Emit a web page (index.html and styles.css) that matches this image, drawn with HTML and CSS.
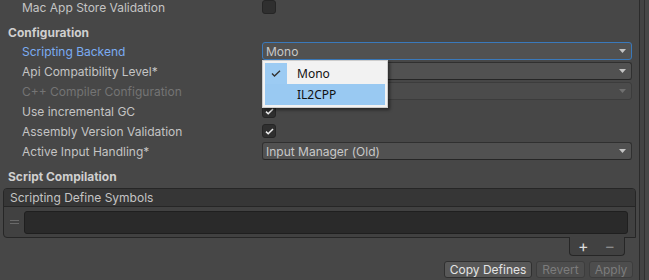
FILE: index.html
```html
<!DOCTYPE html>
<html>
<head>
<meta charset="utf-8">
<link rel="stylesheet" href="styles.css">
</head>
<body>
<div class="window">
  <div class="main">
    <div class="row">
      <span class="label">Mac App Store Validation</span>
      <span class="field"><span class="checkbox"></span></span>
    </div>
    <div class="section">Configuration</div>
    <div class="row">
      <span class="label focused">Scripting Backend</span>
      <span class="field popup-anchor">
        <span class="dropdown focus"><span class="dd-text">Mono</span><svg class="arrow" width="7" height="4" viewBox="0 0 7 4"><path d="M0 0h7L3.5 4z"/></svg></span>
        <div class="popup">
          <div class="item checked"><span class="check-cell"><svg width="10" height="7" viewBox="0 0 10 7"><path d="M1 3.5l2.5 2.5L9 0.8" fill="none" stroke="#333" stroke-width="1.4"/></svg></span><span class="item-text">Mono</span></div>
          <div class="item hover"><span class="check-cell"></span><span class="item-text">IL2CPP</span></div>
        </div>
      </span>
    </div>
    <div class="row">
      <span class="label">Api Compatibility Level*</span>
      <span class="field"><span class="dropdown"><span class="dd-text"></span><svg class="arrow" width="7" height="4" viewBox="0 0 7 4"><path d="M0 0h7L3.5 4z"/></svg></span></span>
    </div>
    <div class="row">
      <span class="label disabled">C++ Compiler Configuration</span>
      <span class="field"><span class="dropdown off"><span class="dd-text"></span><svg class="arrow" width="7" height="4" viewBox="0 0 7 4"><path d="M0 0h7L3.5 4z"/></svg></span></span>
    </div>
    <div class="row">
      <span class="label">Use incremental GC</span>
      <span class="field"><span class="checkbox"><svg width="9" height="7" viewBox="0 0 9 7"><path d="M1 3.6l2.2 2.2L8 1" fill="none" stroke="#eeeeee" stroke-width="1.5"/></svg></span></span>
    </div>
    <div class="row">
      <span class="label">Assembly Version Validation</span>
      <span class="field"><span class="checkbox"><svg width="9" height="7" viewBox="0 0 9 7"><path d="M1 3.6l2.2 2.2L8 1" fill="none" stroke="#eeeeee" stroke-width="1.5"/></svg></span></span>
    </div>
    <div class="row">
      <span class="label">Active Input Handling*</span>
      <span class="field"><span class="dropdown"><span class="dd-text">Input Manager (Old)</span><svg class="arrow" width="7" height="4" viewBox="0 0 7 4"><path d="M0 0h7L3.5 4z"/></svg></span></span>
    </div>
    <div class="section">Script Compilation</div>
    <div class="list">
      <div class="list-header">Scripting Define Symbols</div>
      <div class="list-body">
        <span class="handle"></span>
        <span class="text-input"></span>
      </div>
    </div>
    <div class="footer-wrap">
      <div class="list-footer"><span class="fbtn">+</span><span class="fbtn">−</span></div>
    </div>
    <div class="buttons">
      <span class="btn copy">Copy Defines</span>
      <span class="btn off revert">Revert</span>
      <span class="btn off apply">Apply</span>
    </div>
  </div>
  <div class="scroll"><div class="track"></div></div>
</div>
</body>
</html>
```

FILE: styles.css
```css
* { box-sizing: border-box; }
html, body { margin: 0; padding: 0; }
body {
  background: #474747;
  font-family: Inter, "Noto Sans", sans-serif;
  font-size: 12px;
  color: #c4c4c4;
  width: 649px;
  height: 280px;
  overflow: hidden;
}
.window { display: flex; height: 280px; }
.main { flex: 0 0 639px; margin-top: -3px; }
.scroll { flex: 1; border-left: 1px solid #2b2b2b; }
.track { width: 5px; height: 100%; border-right: 1px solid #2f2f2f; background: #434343; }

.row {
  display: grid;
  grid-template-columns: 262px 370px;
  height: 20px;
  align-items: center;
}
.label { padding-left: 22px; white-space: nowrap; }
.label.focused { color: #7bacf2; }
.label.disabled { color: #747474; }
.field { display: flex; align-items: center; height: 20px; }
.popup-anchor { position: relative; }

.section {
  font-weight: 700;
  padding: 8px 0 0 8px;
  height: 24px;
  line-height: 16px;
  color: #cfcfcf;
}

.checkbox {
  width: 14px; height: 14px;
  background: #2f2f2f;
  border: 1px solid #252525;
  border-radius: 3px;
  display: flex; align-items: center; justify-content: center;
}

.dropdown {
  flex: 1;
  height: 18px;
  background: #515151;
  border: 1px solid #303030;
  border-bottom-color: #262626;
  border-radius: 3px;
  display: flex;
  align-items: center;
  justify-content: space-between;
  padding: 0 5px 0 3px;
  color: #c8c8c8;
}
.dropdown.focus { border-color: #3a79bb; }
.dropdown.off { background: #4b4b4b; border-color: #3c3c3c; color: #777; }
.arrow path { fill: #c4c4c4; }
.dropdown.off .arrow path { fill: #6f6f6f; }

.popup {
  position: absolute;
  left: 0; top: 19px;
  width: 126px;
  background: #f2f2f2;
  border: 1px solid #cdcdcd;
  padding: 2px;
  box-shadow: 2px 2px 3px rgba(0,0,0,0.45);
  font-family: "Noto Sans", "Open Sans", sans-serif;
  font-size: 12px;
  color: #111;
  z-index: 5;
}
.item { display: flex; height: 21px; align-items: center; }
.check-cell { width: 22px; height: 21px; display: flex; align-items: center; justify-content: center; }
.item.checked .check-cell { background: #9ccbf3; }
.item.hover { background: #99c9f2; }
.item-text { padding-left: 10px; }

.list {
  margin: 3px 3px 0 3px;
  border: 1px solid #262626;
  border-radius: 4px 4px 0 4px;
  background: #414141;
}
.list-header {
  height: 18px;
  line-height: 17px;
  padding-left: 6px;
  background: #363636;
  border-bottom: 1px solid #262626;
  border-radius: 3px 3px 0 0;
  color: #c4c4c4;
}
.list-body {
  height: 30px;
  display: flex;
  align-items: flex-start;
  padding: 4px 7px 0 6px;
}
.handle {
  width: 9px; height: 4px;
  margin-top: 9px;
  border-top: 1px solid #6a6a6a;
  border-bottom: 1px solid #6a6a6a;
}
.text-input {
  flex: 1;
  height: 23px;
  margin-left: 5px;
  background: #2a2a2a;
  border: 1px solid #1f1f1f;
  border-radius: 3px;
}

.footer-wrap { display: flex; justify-content: flex-end; padding-right: 14px; }
.list-footer {
  width: 56px; height: 19px;
  margin-top: -1px;
  background: #414141;
  border: 1px solid #262626;
  border-top: none;
  border-radius: 0 0 4px 4px;
  display: flex; align-items: center; justify-content: space-between;
  padding: 0 9px 0 8px;
  font-size: 16px;
  color: #dcdcdc;
}
.list-footer .fbtn:last-child { color: #8a8a8a; }

.buttons {
  display: flex;
  justify-content: flex-end;
  gap: 4px;
  padding-right: 6px;
  margin-top: 5px;
}
.btn {
  height: 17px;
  line-height: 15px;
  text-align: center;
  background: #585858;
  border: 1px solid #303030;
  border-radius: 3px;
  color: #e4e4e4;
  white-space: nowrap;
}
.btn.copy { width: 88px; }
.btn.revert { width: 49px; }
.btn.apply { width: 44px; }
.btn.off { background: #4d4d4d; border-color: #3d3d3d; color: #7c7c7c; }
```
